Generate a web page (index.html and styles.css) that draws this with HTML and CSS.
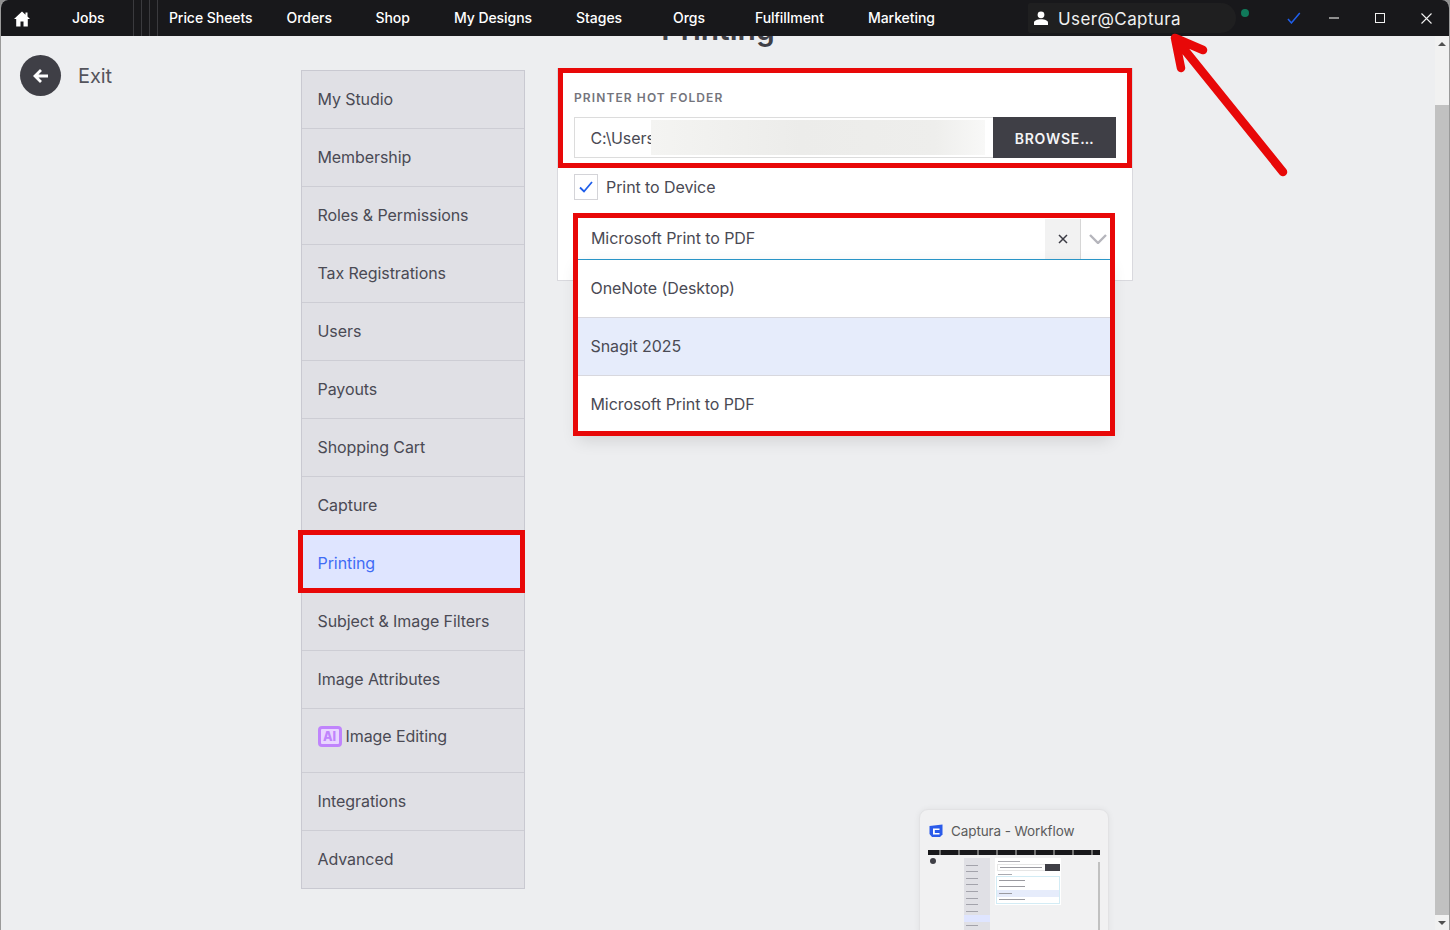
FILE: index.html
```html
<!DOCTYPE html>
<html lang="en">
<head>
<meta charset="utf-8">
<title>Captura - Workflow</title>
<link rel="stylesheet" href="styles.css">
</head>
<body>
<div class="window">
  <header class="topbar">
    <svg class="home" viewBox="0 0 18 18" width="18" height="18"><path d="M9 1.500 1 9h2.200v7.500h4.300v-5h3v5h4.300V9H17l-2.500-2.400V2.500h-2v2.200z" fill="#fff"/></svg>
    <a class="nav jobs">Jobs</a>
    <div class="grips"><i></i><i></i><i></i></div>
    <nav class="navlist">
      <a class="nav tight">Price Sheets</a>
      <a class="nav mid">Orders</a>
      <a class="nav">Shop</a>
      <a class="nav">My Designs</a>
      <a class="nav stages">Stages</a>
      <a class="nav orgs">Orgs</a>
      <a class="nav">Fulfillment</a>
      <a class="nav">Marketing</a>
    </nav>
    <div class="user">
      <svg viewBox="0 0 14 14" width="14" height="14"><circle cx="7" cy="3.800" r="3.400" fill="#fff"/><path d="M0 14v-2.500C0 9.500 3 8.200 7 8.200s7 1.300 7 3.300V14z" fill="#fff"/></svg>
      <span>User@Captura</span>
    </div>
    <span class="status"></span>
    <svg class="tick" viewBox="0 0 14 12" width="14" height="12"><path d="M1 7l3.500 4L13 1" fill="none" stroke="#1f5eea" stroke-width="1.600"/></svg>
    <div class="winctl">
      <span class="ctl"><i class="min"></i></span>
      <span class="ctl"><i class="max"></i></span>
      <span class="ctl"><svg viewBox="0 0 11 11" width="11" height="11"><path d="M.5.5l10 10M10.500.5l-10 10" stroke="#f0f0f0" stroke-width="1.100" fill="none"/></svg></span>
    </div>
  </header>

  <div class="title-clip"><h1 class="title">Printing</h1></div>

  <main class="body">
    <div class="exit">
      <span class="exit-btn"><svg viewBox="0 0 20 20" width="20" height="20"><path d="M17 10H4M10 4l-6 6 6 6" fill="none" stroke="#fff" stroke-width="2.800"/></svg></span>
      <span class="exit-label">Exit</span>
    </div>

    <ul class="menu">
      <li>My Studio</li>
      <li>Membership</li>
      <li>Roles &amp; Permissions</li>
      <li>Tax Registrations</li>
      <li>Users</li>
      <li>Payouts</li>
      <li>Shopping Cart</li>
      <li>Capture</li>
      <li class="active">Printing</li>
      <li>Subject &amp; Image Filters</li>
      <li>Image Attributes</li>
      <li class="tall"><span class="ai">AI</span>Image Editing</li>
      <li>Integrations</li>
      <li>Advanced</li>
    </ul>

    <section class="card">
      <label class="field-label">PRINTER HOT FOLDER</label>
      <div class="path-row">
        <div class="path-input">C:\Users<span class="blur"></span></div>
        <button class="browse">BROWSE…</button>
      </div>
      <div class="check-row">
        <span class="checkbox"><svg viewBox="0 0 14 12" width="14" height="12"><path d="M1 6.500l4 4L13 1" fill="none" stroke="#1f5eea" stroke-width="1.800"/></svg></span>
        <span>Print to Device</span>
      </div>
      <div class="select">
        <div class="select-head">
          <span class="select-value">Microsoft Print to PDF</span>
          <span class="clear"><svg viewBox="0 0 10 10" width="10" height="10"><path d="M1 1l8 8M9 1L1 9" stroke="#3b3b44" stroke-width="1.500" fill="none"/></svg></span>
          <span class="caret"><svg viewBox="0 0 18 10" width="18" height="10"><path d="M1 1l8 8 8-8" stroke="#b5b5bc" stroke-width="2.400" fill="none"/></svg></span>
        </div>
        <ul class="options">
          <li>OneNote (Desktop)</li>
          <li class="hl">Snagit 2025</li>
          <li>Microsoft Print to PDF</li>
        </ul>
      </div>
    </section>
  </main>

  <div class="scrollbar">
    <span class="arrow up"></span>
    <span class="thumb"></span>
    <span class="arrow down"></span>
  </div>

  <aside class="preview">
    <div class="preview-head">
      <svg viewBox="0 0 14 14" width="14" height="14"><path d="M.5 2 13.500.5v10L11 13H3L.5 10z" fill="#2b5bea"/><path d="M4 4.500h6.500v1.500H5.800v3h4.700V10.500H4z" fill="#fff"/></svg>
      <span>Captura - Workflow</span>
    </div>
    <div class="thumbnail">
      <div class="t-bar"></div>
      <div class="t-exit"></div>
      <div class="t-menu"><i></i><i></i><i></i><i></i><i></i><i></i><i></i><i></i><i class="on"></i><i></i><i></i></div>
      <div class="t-card">
        <b class="t-label"></b>
        <div class="t-input"><b class="t-text"></b><b class="t-btn"></b></div>
        <b class="t-label tiny"></b>
        <div class="t-select">
          <div class="t-row"><b class="t-text half"></b></div>
          <div class="t-row"><b class="t-text half"></b></div>
          <div class="t-row hl"><b class="t-text third"></b></div>
          <div class="t-row"><b class="t-text half"></b></div>
        </div>
      </div>
      <div class="t-scroll"></div>
    </div>
  </aside>

  <div class="mark mark-hot"></div>
  <div class="mark mark-select"></div>
  <div class="mark mark-printing"></div>
  <svg class="arrow-note" viewBox="0 0 130 150" width="130" height="150">
    <path d="M120 142 12 8M12 8l6 30M12 8l28 12" fill="none" stroke="#e80808" stroke-width="8.500" stroke-linecap="round" stroke-linejoin="round"/>
  </svg>
</div>
</body>
</html>
```
FILE: styles.css
```css
* { box-sizing: border-box; }
html, body { margin: 0; height: 100%; background: #8f8f8f; overflow: hidden; }
ul { list-style: none; margin: 0; padding: 0; }
.window {
  position: relative;
  width: 1450px;
  height: 930px;
  background: #edeef0;
  border-left: 1px solid #9a9a9a;
  border-right: 1px solid #9a9a9a;
  border-radius: 8px 8px 0 0;
  overflow: hidden;
  font-family: Inter, "Liberation Sans", sans-serif;
  color: #4a4a54;
}

/* top bar */
.topbar {
  position: relative;
  z-index: 2;
  height: 36px;
  background: #18181b;
  display: flex;
  align-items: center;
  color: #fff;
  font-size: 14px;
  font-weight: 500;
  letter-spacing: -.05px;
}
.home { margin-left: 12px; flex: none; margin-top: 1px; }
.nav { white-space: nowrap; padding: 0 22px; margin-top: -1px; }
.jobs { padding: 0; margin-left: 41px; width: 62px; }
.grips { display: flex; height: 36px; margin-right: -11px; }
.grips i { width: 8px; border-left: 1px solid #3a3a3e; }
.grips i:last-child { border-right: 1px solid #3a3a3e; width: 9px; }
.navlist { display: flex; }
.nav.tight { padding: 0 17px 0 22px; }
.nav.mid { padding: 0 21.500px 0 17px; }
.nav.stages { padding: 0 25.5px 0 22px; }
.nav.orgs { padding: 0 28px 0 25.5px; }
.user {
  margin-left: 71px;
  width: 212px;
  height: 30px;
  padding-left: 6px;
  display: flex;
  align-items: center;
  gap: 10px;
  background: #1f1f20;
  border-radius: 4px 30px 30px 4px;
  font-size: 17px;
  font-weight: 400;
  letter-spacing: .4px;
  color: #f0f0f0;
}
.user span { margin-top: 2px; }
.status { width: 8px; height: 8px; border-radius: 50%; background: #10795a; margin: -10px 0 0 5px; }
.tick { margin-left: 38px; }
.winctl { display: flex; margin-left: 10px; }
.ctl { width: 46px; height: 36px; display: flex; align-items: center; justify-content: center; }
.min { width: 10px; height: 2px; background: #8f8f8f; }
.max { width: 10px; height: 10px; border: 1.500px solid #f0f0f0; }

.title-clip {
  position: absolute;
  left: 559px;
  top: 36px;
  width: 316px;
  height: 14px;
  overflow: hidden;
}
.title {
  margin: -27px 0 0;
  text-align: center;
  font-size: 30px;
  line-height: 40px;
  font-weight: 600;
  color: #3f3f46;
}

/* body layout */
.body {
  display: flex;
  align-items: flex-start;
  padding: 19px 0 0 19px;
  letter-spacing: -.08px;
}
.exit { display: flex; align-items: center; width: 281px; gap: 17px; }
.exit-btn {
  width: 41px; height: 41px; border-radius: 50%;
  background: #3f3f46;
  display: flex; align-items: center; justify-content: center;
}
.exit-label { font-size: 20px; color: #54545c; }

.menu {
  width: 224px;
  margin-top: 15px;
  background: #e0e0e5;
  border: 1px solid #c9c9d1;
  flex: none;
}
.menu li {
  height: 58px;
  padding: 0 0 2px 15.500px;
  display: flex;
  align-items: center;
  font-size: 16px;
  border-bottom: 1px solid #cdcdd4;
}
.menu li:last-child { border-bottom: 0; height: 57px; padding-bottom: 1px; }
.menu .tall { height: 64px; padding-bottom: 9px; }
.menu .active { background: #dfe5ff; color: #3f6cf5; }
.ai {
  width: 24px; height: 21px;
  margin: 0 4px 0 0;
  border-radius: 4px;
  border: 3px solid #c084fc;
  background: #e9d5ff;
  color: #c084fc;
  font-size: 12.500px;
  font-weight: 800;
  letter-spacing: 0;
  line-height: 15px;
  text-align: center;
}

.card {
  width: 576px;
  height: 213px;
  margin: 13px 0 0 32px;
  padding: 22px 16px 0;
  background: #fff;
  border: 1px solid #d9d9de;
  border-top: 0;
  flex: none;
  font-size: 16px;
}
.field-label {
  display: block;
  font-size: 12px;
  font-weight: 600;
  line-height: 16px;
  letter-spacing: 1.100px;
  color: #74747c;
}
.path-row { display: flex; margin-top: 11px; height: 41px; }
.path-input {
  position: relative;
  width: 419px;
  padding-left: 15.500px;
  border: 1px solid #dcdcdc;
  border-right: 0;
  line-height: 40px;
  color: #4a4a54;
  overflow: hidden;
}
.blur {
  position: absolute;
  left: 76px; top: 2px; bottom: 2px;
  width: 334px;
  background: linear-gradient(90deg, #f4f4f2, #ececea 45%, #eeeeec 85%, #f8f8f7);
}
.browse {
  width: 123px;
  border: 0;
  padding: 2px 0 0;
  background: #3f3f46;
  color: #f4f4f6;
  font: 600 14px Inter, "Liberation Sans", sans-serif;
  letter-spacing: .8px;
}
.check-row { display: flex; align-items: center; gap: 8px; margin-top: 16px; height: 26px; }
.checkbox {
  width: 24px; height: 26px;
  border: 1px solid #d4d4d8;
  display: flex; align-items: center; justify-content: center;
}
.select { position: relative; margin: 19px 0 0 4px; width: 532px; }
.select-head {
  height: 41px;
  display: flex;
  align-items: stretch;
  border-bottom: 1px solid #2b99cc;
  background: #fff;
}
.select-value { flex: 1; padding-left: 13px; line-height: 39px; }
.clear {
  width: 36px;
  background: #f2f2f2;
  border-right: 1px solid #d6d6d6;
  display: flex; align-items: center; justify-content: center;
  position: relative; left: 1px;
}
.caret { width: 30px; display: flex; align-items: center; justify-content: center; padding-left: 6px; }
.options {
  position: absolute;
  z-index: 1;
  left: 0; right: 0; top: 41px;
  background: #fff;
  box-shadow: 0 6px 16px rgba(0,0,0,.12);
}
.options li {
  height: 58px;
  padding: 0 0 1px 12.500px;
  display: flex;
  align-items: center;
  border-bottom: 1px solid #d8d8de;
}
.options li:last-child { border-bottom: 0; padding-bottom: 2px; }
.options .hl { background: #e6ecfb; }

/* scrollbar */
.scrollbar {
  position: absolute;
  right: 0; top: 36px; bottom: 0;
  width: 14px;
  background: #f1f1f1;
  z-index: 1;
}
.thumb { position: absolute; left: 0; right: 0; top: 69px; bottom: 15px; background: #c1c1c1; }
.arrow { position: absolute; left: 3px; width: 0; height: 0; border-left: 4px solid transparent; border-right: 4px solid transparent; }
.arrow.up { top: 6px; border-bottom: 4px solid #505050; }
.arrow.down { bottom: 5px; border-top: 4px solid #505050; }

/* taskbar preview */
.preview {
  position: absolute;
  z-index: 3;
  left: 918px;
  top: 809px;
  width: 190px;
  height: 131px;
  background: #f1f1f2;
  border: 1px solid #e2e2e4;
  border-radius: 9px;
  box-shadow: 0 0 6px rgba(0,0,0,.06);
}
.preview-head {
  display: flex; align-items: center; gap: 8px;
  height: 40px; padding: 1px 0 0 9px;
  font-size: 13.500px; color: #5c5c5c;
  letter-spacing: -.1px;
}
.thumbnail { position: relative; margin-left: 8px; width: 172px; height: 80px; filter: blur(.4px); }
.t-bar { height: 5px; background: repeating-linear-gradient(90deg, #18181b 0 11px, #707070 11px 13px, #18181b 13px 19px); }
.t-exit { position: absolute; left: 2px; top: 8px; width: 6px; height: 6px; border-radius: 50%; background: #3f3f46; }
.t-menu { position: absolute; left: 36px; top: 8px; width: 26px; height: 72px; background: #e0e0e5; padding-top: 1px; }
.t-menu i { display: block; width: 12px; height: 1px; margin: 5.600px 0 0 2px; background: #a3a3ab; }
.t-menu i.on { width: 26px; height: 7px; margin: 3px 0 -2px; background: #dfe5ff; }
.t-card { position: absolute; left: 67px; top: 8px; width: 66px; height: 47px; background: #fff; padding: 3px 1px; }
.t-label { display: block; width: 22px; height: 1px; margin-left: 2px; background: #aaaab0; }
.t-label.tiny { width: 14px; margin-top: 3px; }
.t-input { display: flex; align-items: center; justify-content: space-between; height: 7px; margin: 2px 0 0 1px; border: 1px solid #e6e6e6; border-right: 0; }
.t-text { display: block; width: 42px; height: 1px; margin-left: 2px; background: #9a9aa0; }
.t-text.half { width: 26px; }
.t-text.third { width: 13px; }
.t-btn { width: 15px; height: 7px; background: #3f3f46; }
.t-select { margin-top: 1px; border: 1px solid #d3ecf5; height: 28px; }
.t-row { height: 6.500px; display: flex; align-items: center; }
.t-row.hl { background: #e6ecfb; }
.t-scroll { position: absolute; right: 0; top: 12px; bottom: 0; width: 2px; background: #c1c1c1; }

/* annotation marks */
.mark { position: absolute; z-index: 4; border: 5px solid #e80808; pointer-events: none; }
.mark-hot { left: 557px; top: 68px; width: 574px; height: 100px; }
.mark-select { left: 572px; top: 213px; width: 542px; height: 223px; }
.mark-printing { left: 297px; top: 530px; width: 227px; height: 63px; }
.arrow-note { position: absolute; z-index: 4; left: 1162px; top: 30px; }
```
